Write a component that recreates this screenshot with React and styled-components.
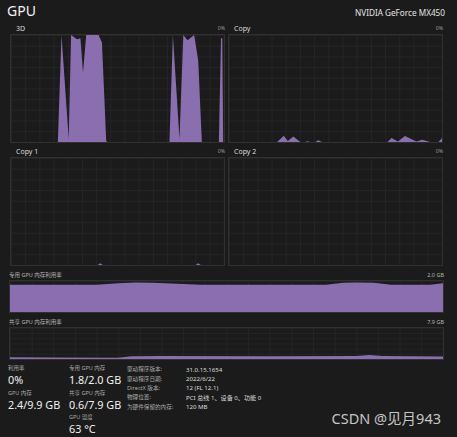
import styled, { createGlobalStyle } from 'styled-components'

const GlobalStyle = createGlobalStyle`
  html, body {
    margin: 0;
    padding: 0;
    background: #1b1b1b;
  }
  * {
    box-sizing: border-box;
  }
`

const PURPLE = '#8a6eaf'

const charts = [
  {
    name: '3D',
    points: [
      [0, 0], [22.0, 0], [23.7, 100], [27.1, 3], [28.2, 100], [31.0, 96],
      [32.6, 97], [33.8, 65], [35.3, 100], [41.1, 100], [42.7, 93], [44.7, 1],
      [45.3, 0], [74.4, 0], [76.0, 100], [79.1, 3], [80.9, 100], [82.9, 95],
      [86.0, 100], [87.9, 76], [89.6, 0], [97.6, 0], [98.6, 97], [99.2, 97],
      [99.6, 0], [100, 0],
    ],
  },
  {
    name: 'Copy',
    points: [
      [0, 0], [22.6, 0], [25.7, 5.8], [27.6, 1], [30.2, 5.2], [33.5, 0],
      [35.8, 0], [36.9, 0.8], [38.1, 0], [40.5, 0], [41.9, 1.6], [43.6, 0],
      [74.4, 0], [76.3, 3.7], [79.3, 0.5], [82.6, 5.5], [88, 0.5], [90.7, 2.1],
      [94.4, 0], [98.4, 0], [100, 3.7], [100, 0],
    ],
  },
  {
    name: 'Copy 1',
    points: [
      [0, 0], [40.7, 0], [41.9, 1.6], [43.1, 0], [86.7, 0], [87.9, 1.6],
      [89.1, 0], [100, 0],
    ],
  },
  { name: 'Copy 2', points: [[0, 0], [100, 0]] },
]

const memory = [
  {
    name: '专用 GPU 内存利用率',
    max: '2.0 GB',
    points: [
      [0, 88], [20, 88], [25, 93], [29, 95], [33, 94], [40, 90], [44, 88],
      [73, 88], [77, 94], [80, 95], [84, 94], [88, 88], [97, 88], [100, 93],
    ],
  },
  {
    name: '共享 GPU 内存利用率',
    max: '7.9 GB',
    points: [
      [0, 6], [10, 5], [25, 4], [28, 9], [35, 10], [60, 9], [80, 10],
      [83, 13], [86, 10], [100, 8],
    ],
  },
]

const statColumns = [
  [
    { label: '利用率', value: '0%' },
    { label: 'GPU 内存', value: '2.4/9.9 GB' },
  ],
  [
    { label: '专用 GPU 内存', value: '1.8/2.0 GB' },
    { label: '共享 GPU 内存', value: '0.6/7.9 GB' },
    { label: 'GPU 温度', value: '63 °C' },
  ],
]

const info = [
  ['驱动程序版本:', '31.0.15.1654'],
  ['驱动程序日期:', '2022/6/22'],
  ['DirectX 版本:', '12 (FL 12.1)'],
  ['物理位置:', 'PCI 总线 1、设备 0、功能 0'],
  ['为硬件保留的内存:', '120 MB'],
]

function Area({ points }) {
  const d = [[0, 0], ...points, [100, 0]]
    .map(([x, v]) => `${x},${100 - v}`)
    .join(' ')
  return (
    <Svg viewBox="0 0 100 100" preserveAspectRatio="none">
      <polygon points={d} fill={PURPLE} />
    </Svg>
  )
}

function App() {
  return (
    <Page>
      <GlobalStyle />
      <Header>
        <Title>GPU</Title>
        <Model>NVIDIA GeForce MX450</Model>
      </Header>

      <ChartGrid>
        {charts.map((c) => (
          <div key={c.name}>
            <ChartLabel>
              <span>{c.name}</span>
              <small>0%</small>
            </ChartLabel>
            <ChartBox $cols={15} $rows={10}>
              <Area points={c.points} />
            </ChartBox>
          </div>
        ))}
      </ChartGrid>

      <MemorySection>
        {memory.map((m) => (
          <div key={m.name}>
            <MemoryLabel>
              <span>{m.name}</span>
              <span>{m.max}</span>
            </MemoryLabel>
            <MemoryBox $cols={20} $rows={6}>
              <Area points={m.points} />
            </MemoryBox>
          </div>
        ))}
      </MemorySection>

      <Stats>
        {statColumns.map((col, i) => (
          <StatColumn key={i} $width={i === 0 ? 61 : 58}>
            {col.map((s) => (
              <Stat key={s.label}>
                <StatLabel>{s.label}</StatLabel>
                <StatValue>{s.value}</StatValue>
              </Stat>
            ))}
          </StatColumn>
        ))}
        <InfoTable>
          {info.map(([k, v]) => (
            <InfoRow key={k}>
              <InfoKey>{k}</InfoKey>
              <InfoValue>{v}</InfoValue>
            </InfoRow>
          ))}
        </InfoTable>
      </Stats>

      <Watermark>CSDN @见月943</Watermark>
    </Page>
  )
}

const Page = styled.div`
  position: relative;
  width: 457px;
  height: 437px;
  overflow: hidden;
  background: #1b1b1b;
  font-family: 'Noto Sans', 'Noto Sans CJK SC', sans-serif;
  color: #f0f0f0;
`

const Header = styled.div`
  display: flex;
  justify-content: space-between;
  align-items: baseline;
  height: 22px;
  padding: 0 12px 0 7px;
`

const Title = styled.div`
  font-size: 14px;
  line-height: 22px;
  color: #f2f2f2;
`

const Model = styled.div`
  font-size: 8.2px;
  color: #e6e6e6;
`

const ChartGrid = styled.div`
  display: grid;
  grid-template-columns: 215px 215px;
  column-gap: 3px;
  row-gap: 2px;
  padding-left: 10px;
`

const ChartLabel = styled.div`
  display: flex;
  justify-content: space-between;
  align-items: center;
  height: 12px;
  padding-left: 6px;
  font-size: 7px;
  color: #dadada;

  small {
    font-size: 5.2px;
    color: #9a9a9a;
  }
`

const gridBg = (cols, rows) => `
  background-image:
    linear-gradient(to right, #242424 1px, transparent 1px),
    linear-gradient(to bottom, #242424 1px, transparent 1px);
  background-size: calc(100% / ${cols}) calc(100% / ${rows});
`

const ChartBox = styled.div`
  height: 109px;
  border: 1px solid #303030;
  ${(p) => gridBg(p.$cols, p.$rows)}
`

const Svg = styled.svg`
  display: block;
  width: 100%;
  height: 100%;
`

const MemorySection = styled.div`
  width: 444px;
  padding-left: 9px;
`

const MemoryLabel = styled.div`
  display: flex;
  justify-content: space-between;
  align-items: center;
  height: 10px;
  margin-top: 3px;
  font-size: 5.5px;
  color: #b4b4b4;

  &:first-child {
    margin-top: 4px;
  }
`

const MemoryBox = styled.div`
  height: 33px;
  border: 1px solid #303030;
  ${(p) => gridBg(p.$cols, p.$rows)}
`

const Stats = styled.div`
  display: flex;
  padding: 4px 0 0 8px;
`

const StatColumn = styled.div`
  display: flex;
  flex-direction: column;
  gap: 1.5px;
  width: ${(p) => p.$width}px;
`

const Stat = styled.div`
  display: flex;
  flex-direction: column;
`

const StatLabel = styled.div`
  font-size: 5.5px;
  line-height: 9px;
  color: #a8a8a8;
  white-space: nowrap;
`

const StatValue = styled.div`
  font-size: 10.8px;
  line-height: 14px;
  color: #f2f2f2;
  white-space: nowrap;
`

const InfoTable = styled.div`
  display: flex;
  flex-direction: column;
  padding-top: 0.5px;
`

const InfoRow = styled.div`
  display: grid;
  grid-template-columns: 59px auto;
  height: 9.4px;
  align-items: center;
  white-space: nowrap;
`

const InfoKey = styled.span`
  font-size: 5.6px;
  color: #a8a8a8;
`

const InfoValue = styled.span`
  font-size: 6.1px;
  color: #dcdcdc;
`

const Watermark = styled.div`
  position: absolute;
  right: 16px;
  top: 411px;
  font-size: 14.5px;
  line-height: 1;
  color: rgba(230, 230, 230, 0.85);
`

export default App
